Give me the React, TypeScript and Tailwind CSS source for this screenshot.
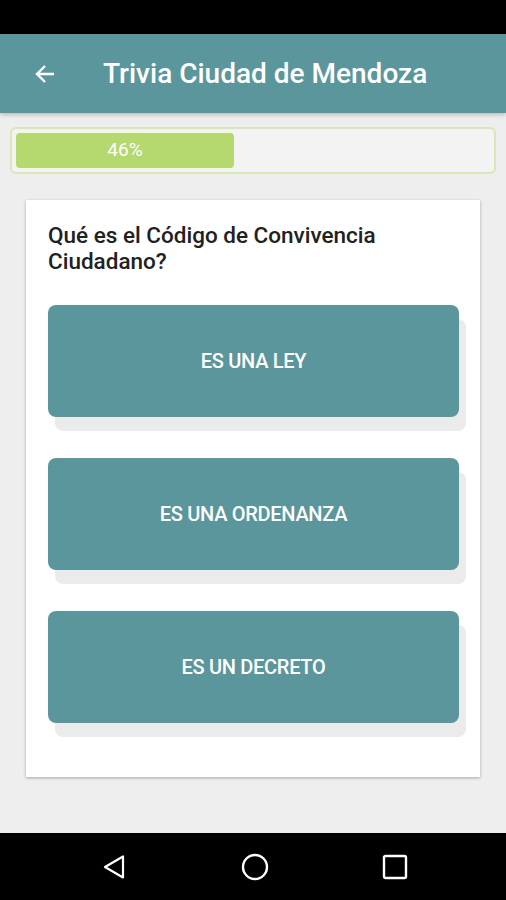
const FONT = { fontFamily: 'Roboto, "Noto Sans", sans-serif' }

const ANSWERS = ['ES UNA LEY', 'ES UNA ORDENANZA', 'ES UN DECRETO']

function AnswerButton({ label }: { label: string }) {
  return (
    <div className="relative h-[112px]">
      {/* sombra desplazada */}
      <div className="absolute left-[7px] top-[14px] h-[112px] w-[411px] rounded-[8px] bg-[#ebebeb]" />
      <button className="relative flex h-[112px] w-[411px] items-center justify-center rounded-[8px] bg-[#5b969c] text-[20px] font-medium tracking-[-0.3px] text-white">
        {label}
      </button>
    </div>
  )
}

export default function App() {
  return (
    <div className="flex h-[900px] w-[506px] flex-col bg-[#eeeeee]" style={FONT}>
      <div className="h-[34px] bg-black" />
      <header className="flex h-[79px] items-center bg-[#5b969c] shadow-[0_2px_4px_rgba(0,0,0,0.2)]">
        <svg className="ml-[33px] h-[24px] w-[24px]" viewBox="0 0 24 24" fill="none" stroke="white" strokeWidth="2.4">
          <path d="M21 12H4M12 4l-8 8 8 8" />
        </svg>
        <h1 className="ml-[46px] text-[28px] font-medium text-white">Trivia Ciudad de Mendoza</h1>
      </header>

      <div className="mx-[10px] mt-[14px] h-[47px] rounded-[6px] border-2 border-[#d8e8b4] bg-[#f3f3f3] p-[4px]">
        <div className="flex h-[35px] w-[218px] items-center justify-center rounded-[4px] bg-[#b5d86f] text-[19px] text-white">
          46%
        </div>
      </div>

      <main className="mx-[26px] mt-[26px] h-[577px] bg-white px-[22px] pt-[22px] shadow-[0_1px_3px_rgba(0,0,0,0.3)]">
        <p className="text-[22.5px] font-medium leading-[26px] text-[#212121]">
          Qué es el Código de Convivencia Ciudadano?
        </p>
        <div className="mt-[31px] flex flex-col gap-[41px]">
          {ANSWERS.map((a) => (
            <AnswerButton key={a} label={a} />
          ))}
        </div>
      </main>

      <div className="flex-1" />
      <nav className="flex h-[67px] items-center bg-black">
        <svg className="absolute left-[101px] h-[26px] w-[26px]" viewBox="0 0 26 26" fill="none" stroke="white" strokeWidth="2.2" strokeLinejoin="round">
          <path d="M22 2.5v21L4 13z" />
        </svg>
        <svg className="absolute left-[241px] h-[28px] w-[28px]" viewBox="0 0 28 28" fill="none" stroke="white" strokeWidth="2.4">
          <circle cx="14" cy="14" r="12" />
        </svg>
        <svg className="absolute left-[382px] h-[26px] w-[26px]" viewBox="0 0 26 26" fill="none" stroke="white" strokeWidth="2.4">
          <rect x="2" y="2" width="22" height="22" rx="1.5" />
        </svg>
      </nav>
    </div>
  )
}
